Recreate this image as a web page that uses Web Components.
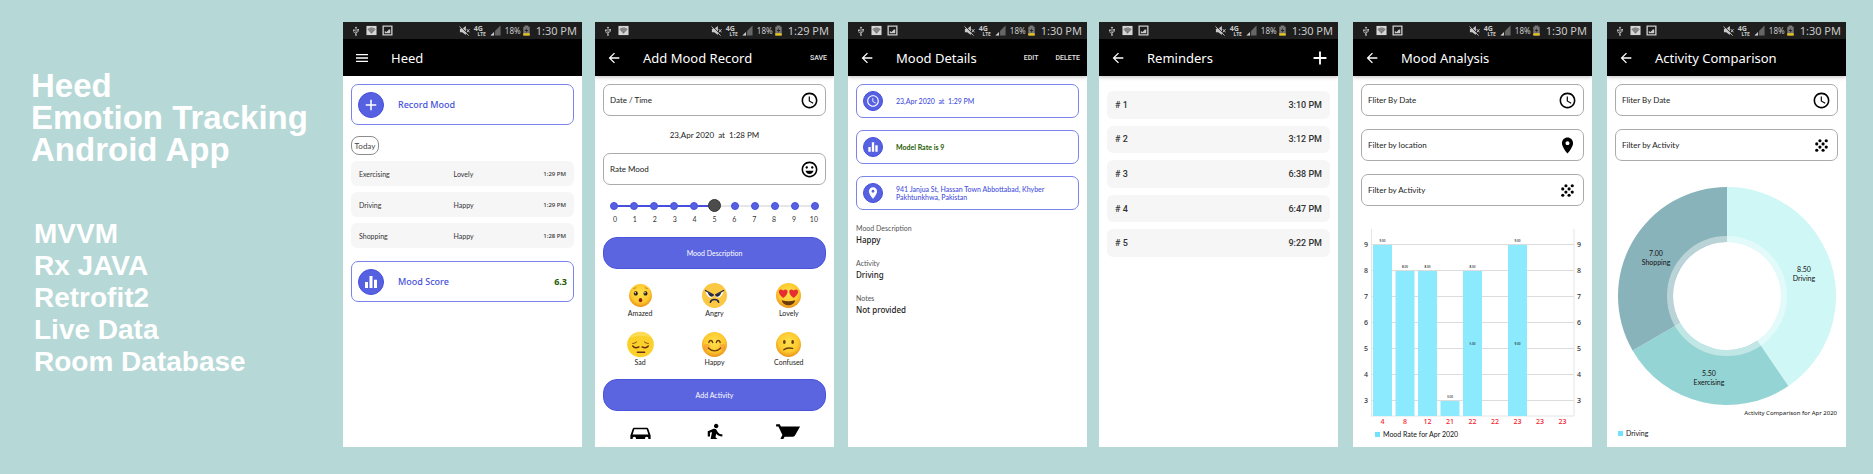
<!doctype html>
<html lang="en">
<head>
<meta charset="utf-8">
<meta name="viewport" content="width=device-width, initial-scale=1">
<title>Heed – Emotion Tracking Android App</title>
<style>
  html, body { margin: 0; background: #b6d8d6; }
  body { font-family: "Noto Sans", "Open Sans", sans-serif; color: #333; }
</style>
</head>
<body>
<heed-showcase></heed-showcase>

<script>
const RESET = `
  *, *::before, *::after { box-sizing: border-box; }
  button { font: inherit; color: inherit; background: none; border: 0; margin: 0; padding: 0; text-align: inherit; cursor: pointer; }
  h1, h2, p, ul, dl, dd, dt { margin: 0; padding: 0; list-style: none; }
  svg { display: block; }
`;
const SMALL = `font-family: Lato, "Noto Sans", sans-serif; font-size: 7px; line-height: 8px;`;
const MEDIUM = `font-family: Lato, "Noto Sans", sans-serif; font-size: 8px; line-height: 10px;`;

/* Registers an element whose shadow root is built by render(host). */
function element(name, css, render) {
  customElements.define(name, class extends HTMLElement {
    connectedCallback() {
      if (this.shadowRoot) return;
      const t = document.createElement('template');
      t.innerHTML = `<style>${RESET}${css}</style>${render(this)}`;
      this.attachShadow({ mode: 'open' }).append(t.content.cloneNode(true));
    }
  });
}

/* ---------- icons ---------- */
const ICONS = {
  menu: '<path d="M3 18h18v-2H3v2zm0-5h18v-2H3v2zm0-7v2h18V6H3z"/>',
  back: '<path d="M20 11H7.83l5.59-5.59L12 4l-8 8 8 8 1.41-1.41L7.83 13H20v-2z"/>',
  add: '<path d="M19 13h-6v6h-2v-6H5v-2h6V5h2v6h6v2z"/>',
  clock: '<path d="M11.99 2C6.47 2 2 6.48 2 12s4.47 10 9.99 10C17.52 22 22 17.52 22 12S17.52 2 11.99 2zM12 20c-4.42 0-8-3.58-8-8s3.58-8 8-8 8 3.58 8 8-3.58 8-8 8zm.5-13H11v6l5.25 3.15.75-1.23-4.5-2.67z"/>',
  mood: '<path d="M11.99 2C6.47 2 2 6.48 2 12s4.47 10 9.99 10C17.52 22 22 17.52 22 12S17.52 2 11.99 2zM12 20c-4.42 0-8-3.58-8-8s3.58-8 8-8 8 3.58 8 8-3.58 8-8 8zm3.5-9c.83 0 1.5-.67 1.5-1.5S16.33 8 15.5 8 14 8.67 14 9.5s.67 1.500 1.500 1.500zm-7 0c.83 0 1.500-.67 1.500-1.500S9.330 8 8.500 8 7 8.670 7 9.500 7.670 11 8.500 11z"/><path d="M6.900 13.500c.75 2.500 2.800 4.200 5.100 4.200s4.350-1.700 5.100-4.200z"/>',
  place: '<path d="M12 2C8.13 2 5 5.13 5 9c0 5.25 7 13 7 13s7-7.750 7-13c0-3.870-3.130-7-7-7zm0 9.500c-1.380 0-2.500-1.120-2.500-2.500s1.120-2.500 2.500-2.500 2.500 1.120 2.500 2.500-1.120 2.500-2.500 2.500z"/>',
  grain: [[10,6],[18,6],[6,10],[14,10],[10,14],[18,14],[6,18],[14,18]].map(([x, y]) => `<circle cx="${x}" cy="${y}" r="2"/>`).join(''),
  bars: '<path d="M10 20h4V4h-4v16zm-6 0h4v-8H4v8zM16 9v11h4V9h-4z"/>',
  car: '<path d="M18.920 6.010C18.720 5.420 18.160 5 17.500 5h-11c-.66 0-1.210.42-1.420 1.010L3 12v8c0 .55.45 1 1 1h1c.55 0 1-.45 1-1v-1h12v1c0 .55.45 1 1 1h1c.55 0 1-.45 1-1v-8l-2.080-5.990zM6.500 16c-.83 0-1.500-.67-1.500-1.500S5.670 13 6.500 13s1.500.67 1.500 1.500S7.330 16 6.500 16zm11 0c-.83 0-1.500-.67-1.500-1.500s.67-1.500 1.500-1.500 1.500.67 1.500 1.500-.67 1.500-1.500 1.500zM5 11l1.500-4.500h11L19 11H5z"/>',
  run: '<path d="M13.490 5.480c1.100 0 2-.9 2-2s-.9-2-2-2-2 .9-2 2 .9 2 2 2zm-3.600 13.900l1-4.400 2.100 2v6h2v-7.500l-2.100-2 .6-3c1.300 1.500 3.300 2.500 5.500 2.500v-2c-1.900 0-3.500-1-4.300-2.400l-1-1.600c-.4-.6-1-1-1.700-1-.3 0-.5.1-.8.1l-5.200 2.200v4.700h2v-3.400l1.800-.7-1.600 8.100-4.900-1-.4 2 7 1.400z"/>',
  cart: '<path d="M1 2v2h2l3.600 7.590-1.350 2.450C4.520 15.370 5.480 17 7 17h12v-2H7.420l1.130-2h7.450c.75 0 1.410-.41 1.750-1.030L22.300 4H5.210l-.94-2H1z"/>',
  usb: '<path d="M12 1l-3 4h2v11.500l-3.500-2.300V12H9V8.500H5V12h1v3.200l5 3.400V20a2 2 0 1 0 2 0v-3l5-3v-3h1V7h-4v4h1v2.200l-3 1.900V5h2z"/>',
  wifi: '<path fill="#d6d6d6" d="M1 2h22v20H1z"/><path fill="#777" d="M3 9c5-5 13-5 18 0l-9 10z"/><path fill="none" stroke="#bbb" d="M5 11c4-4 10-4 14 0M8 14c2-2 6-2 8 0"/>',
  picture: '<path fill-rule="evenodd" d="M1 1h22v22H1zM4 4v16h16V4z"/><path d="M6 18v-5l4 2 5-5h3v8z"/>',
  mute: '<path d="M2 8h5l8-6v20l-8-6H2z"/><path stroke="#1e1e1e" stroke-width="2" d="M3 2l18 20"/><path stroke="currentColor" stroke-width="2" d="M1 3l20 20M17 9l6 7M23 9l-6 7"/>',
  signal: '<path fill="#666" d="M23 1v22H1z"/><path d="M9 15v8H1z"/><path stroke="#1e1e1e" stroke-width="2" d="M10 12v12"/>',
  battery: '<path fill="#777" d="M8 1h8v3h3v19H5V4h3z"/><path fill="#e8c51c" d="M5 18h14v5H5z"/><path fill="#1e1e1e" d="M14 6l-6 7h4l-2 5 6-7h-4z"/>'
};
element('heed-icon', `
  :host { display: block; width: var(--size, 16px); height: var(--size, 16px); flex: none; }
  svg { width: 100%; height: 100%; fill: currentColor; }
`, el => `<svg viewBox="0 0 24 24" aria-hidden="true">${ICONS[el.getAttribute('name')]}</svg>`);

/* ---------- mood faces ---------- */
const FACES = {
  amazed: '<circle cx="12" cy="12" r="11" fill="url(#g)"/><g fill="#2b1e10"><ellipse cx="7.500" cy="10" rx="1.900" ry="2.100"/><ellipse cx="16.800" cy="10" rx="1.900" ry="2.100"/></g><g fill="#fff"><circle cx="7" cy="9.400" r=".7"/><circle cx="16.300" cy="9.400" r=".7"/></g><ellipse cx="12" cy="16.500" rx="1.700" ry="2" fill="#8c2018"/><path d="M5 5.500l3-1M16 4.500l3 1" stroke="#b87510" stroke-width=".7"/>',
  angry: '<circle cx="12" cy="12" r="12" fill="#fbc843"/><path d="M3.500 7.500l7.500 4c0 4-6.500 4-7.500-4zM20.500 7.500l-7.500 4c0 4 6.500 4 7.500-4z" fill="#fff"/><path d="M5.500 9l5.500 2.500c0 2.500-4 2.500-5.500-2.500zM18.500 9l-5.500 2.500c0 2.500 4 2.500 5.500-2.500z" fill="#232943"/><path d="M2.800 7l8.500 4.600M21.200 7l-8.500 4.600" stroke="#232943" stroke-width="1.200"/><path d="M8 18.500c1-3.500 7-3.500 8 0" fill="none" stroke="#232943" stroke-width="1.500" stroke-linecap="round"/>',
  lovely: '<circle cx="12" cy="12" r="12" fill="url(#g)"/><path d="M6.900 14.500C-.5 8.500 3.500 4.200 6.900 7.200c3.900-3.200 7.100 2 0 7.300z" fill="#e72c33"/><path d="M17 14.500c7.500-6 3.500-10.300 0-7.300-3.900-3.200-7.100 2 0 7.300z" fill="#e72c33"/><path d="M5.500 16.500c4 1.300 9 1.300 13 0-1.200 6.500-11.800 6.500-13 0z" fill="#6c3b0c"/>',
  sad: '<ellipse cx="12" cy="12" rx="12.800" ry="12.200" fill="#fbd02a"/><path d="M2 5C7-1 17-2 22 5c-7-2-15-1-20 0z" fill="#fddc55"/><g fill="none" stroke="#6b2c12" stroke-width="1.400" stroke-linecap="round"><path d="M4.500 13.500c1.500 1.800 4 1.800 6 .8M19.500 13.500c-1.500 1.800-4 1.800-6 .8M9 19.500h7"/><path stroke-width=".8" d="M4.500 11c1.500 0 2.800-.6 3.800-1.500M19.500 11c-1.500 0-2.800-.6-3.800-1.500"/></g>',
  happy: '<circle cx="12" cy="12" r="12" fill="url(#g)"/><circle cx="4.500" cy="14.500" r="3" fill="#f88a3c" opacity=".5"/><circle cx="19.500" cy="14.500" r="3" fill="#f88a3c" opacity=".5"/><g fill="none" stroke="#6b3c0c" stroke-width="1.400" stroke-linecap="round"><path d="M6.500 10c.8-2.400 3-2.400 3.800 0M13.700 10c.8-2.400 3-2.400 3.800 0M6.200 15.500c3 3.500 8.600 3.500 11.600 0"/></g>',
  confused: '<circle cx="12" cy="12" r="12" fill="url(#g)"/><g fill="#6b3c0c"><ellipse cx="8" cy="9.500" rx="1.300" ry="1.900"/><ellipse cx="16" cy="9.500" rx="1.300" ry="1.900"/></g><path d="M7.500 17c2-1.700 5-2 8.500-1.200" fill="none" stroke="#6b3c0c" stroke-width="1.300" stroke-linecap="round"/>'
};
element('mood-face', `
  :host { display: block; }
  button { display: flex; flex-direction: column; align-items: center; width: 100%; font-family: Lato, "Noto Sans", sans-serif; font-size: 7px; line-height: 11px; color: #222; }
  svg { width: 25px; height: 25px; overflow: visible; }
`, el => `<button type="button"><svg viewBox="0 0 24 24" aria-hidden="true"><defs><radialGradient id="g" cx=".5" cy=".4" r=".62"><stop offset="0" stop-color="#ffe14d"/><stop offset=".65" stop-color="#fdc92e"/><stop offset="1" stop-color="#e88a16"/></radialGradient></defs>${FACES[el.getAttribute('mood')]}</svg><slot></slot></button>`);

/* ---------- phone frame ---------- */
element('status-bar', `
  :host { display: flex; align-items: center; height: 17px; padding: 0 5px 0 8px; background: #1e1e1e; color: #c9c9c9; --size: 11px; }
  .left, .right { display: flex; align-items: center; }
  .left { gap: 5px; }
  .left heed-icon:first-child { --size: 10px; }
  .right { margin-left: auto; gap: 4px; }
  .net { position: relative; width: 12px; height: 12px; font-size: 7px; line-height: 8px; font-weight: 700; }
  .net small { position: absolute; right: 0; bottom: 0; font-size: 5px; line-height: 5px; }
  .level { display: flex; align-items: center; font-size: 8px; line-height: 12px; }
  time { font-size: 11px; line-height: 16px; }
`, el => `
  <div class="left"><heed-icon name="usb"></heed-icon><heed-icon name="wifi"></heed-icon>${el.hasAttribute('picture') ? '<heed-icon name="picture"></heed-icon>' : ''}</div>
  <div class="right"><heed-icon name="mute"></heed-icon><span class="net">4G<small>LTE</small></span><heed-icon name="signal"></heed-icon><span class="level">18%<heed-icon name="battery"></heed-icon></span><time>${el.getAttribute('time')}</time></div>`);

element('app-phone', `
  :host { display: flex; flex-direction: column; min-width: 0; background: #fff; }
  header { display: flex; align-items: center; gap: 21px; height: 37px; flex: none; padding: 0 7px 0 11px; background: #000; color: #fff; }
  header.raised { box-shadow: 0 1px 4px #00000040; clip-path: inset(0 0 -6px 0); }
  h2 { font-size: 13px; line-height: 18px; font-weight: 400; white-space: nowrap; }
  .actions { display: flex; align-items: center; gap: 17px; margin-left: auto; }
  main { flex: 1; display: flex; flex-direction: column; padding: 8px 8px 0; }
`, el => `
  <status-bar time="${el.getAttribute('time') || '1:30 PM'}" ${el.hasAttribute('plain-status') ? '' : 'picture'}></status-bar>
  <header class="${el.hasAttribute('home') ? '' : 'raised'}">
    <button type="button" aria-label="${el.hasAttribute('home') ? 'Menu' : 'Back'}"><heed-icon name="${el.hasAttribute('home') ? 'menu' : 'back'}"></heed-icon></button>
    <h2>${el.getAttribute('heading')}</h2>
    <div class="actions"><slot name="action"></slot></div>
  </header>
  <main><slot></slot></main>`);

element('bar-action', `
  :host { display: block; }
  button { display: block; font-family: Roboto, sans-serif; font-size: 7px; line-height: 10px; font-weight: 500; color: #e4e4e4; }
`, () => `<button type="button"><slot></slot></button>`);

/* ---------- controls ---------- */
element('field-button', `
  :host { display: block; }
  button { display: flex; align-items: center; justify-content: space-between; width: 100%; height: 32px; padding: 0 6px; border: 1px solid #ababab; border-radius: 7px; ${MEDIUM} color: #222; --size: 19px; }
  heed-icon { color: #000; }
`, el => `<button type="button"><slot></slot><heed-icon name="${el.getAttribute('icon')}"></heed-icon></button>`);

element('pill-button', `
  :host { display: block; }
  button { display: block; width: 100%; height: 32px; border: 1px solid #4a54dc; border-radius: 14px; background: #5b65e0; color: #fff; text-align: center; ${SMALL} }
`, () => `<button type="button"><slot></slot></button>`);

element('info-card', `
  :host { display: block; }
  .card { display: flex; align-items: center; width: 100%; border: 1px solid #7b84ea; border-radius: 7px; padding: 0 6px; color: #4650dc; }
  .large { height: 41px; gap: 14px; font-size: 9px; line-height: 12px; font-weight: 500; --size: 18px; }
  .small { height: 34px; gap: 13px; ${SMALL} font-weight: 500; --size: 14px; }
  .disc { display: grid; place-items: center; flex: none; border-radius: 50%; background: #5661e2; border: 1px solid #444edc; color: #fff; }
  .large .disc { width: 26px; height: 26px; }
  .small .disc { width: 20px; height: 20px; }
  .pre { white-space: pre; }
  ::slotted([slot=end]) { margin-left: auto; color: #1d5a00; font-weight: 700; }
`, el => {
  const tag = el.hasAttribute('small') ? 'div' : 'button type="button"';
  return `<${tag} class="card ${el.hasAttribute('small') ? 'small' : 'large'}"><span class="disc"><heed-icon name="${el.getAttribute('icon')}"></heed-icon></span><span class="pre"><slot></slot></span><slot name="end"></slot></${tag.split(' ')[0]}>`;
});

element('rate-slider', `
  :host { display: block; }
  .rail { position: relative; height: 14px; margin: 0 7px; }
  .line { position: absolute; inset: 6px 4px; height: 2px; background: linear-gradient(90deg, #4650dc 50%, #e6e6e6 50%); }
  .dots { position: absolute; inset: 3px 0; display: flex; justify-content: space-between; }
  .dots i { width: 8px; height: 8px; border-radius: 50%; background: #5560e2; border: 1px solid #4650dc; }
  input { position: absolute; inset: 0; width: 100%; height: 14px; margin: 0; appearance: none; background: none; }
  input::-webkit-slider-runnable-track { height: 14px; background: none; }
  input::-webkit-slider-thumb { appearance: none; width: 13px; height: 13px; border-radius: 50%; background: #4c4c4c; border: 1px solid #333; }
  ol { display: flex; justify-content: space-between; margin: 1px 7px 0; padding: 0; list-style: none; font-family: Lato, "Noto Sans", sans-serif; font-size: 7px; line-height: 10px; color: #333; }
  li { width: 10px; text-align: center; }
`, () => `
  <div class="rail"><div class="line"></div><div class="dots">${'<i></i>'.repeat(11)}</div><input type="range" min="0" max="10" value="5" aria-label="Rate Mood"></div>
  <ol>${[...Array(11).keys()].map(n => `<li>${n}</li>`).join('')}</ol>`);

/* ---------- screens ---------- */
element('home-screen', `
  :host { display: block; }
  .chip { display: block; width: 28px; height: 19px; margin: 11px 0 6px; border: 1px solid #8c8c8c; border-radius: 8px; text-align: center; ${MEDIUM} color: #444; }
  table { width: 100%; table-layout: fixed; border-spacing: 0 6px; margin: -6px 0 7px; ${SMALL} color: #333; }
  td { height: 25px; padding: 0; background: #f6f6f6; }
  td:first-child { width: 46%; padding-left: 8px; border-radius: 6px 0 0 6px; }
  td:last-child { text-align: right; padding-right: 8px; border-radius: 0 6px 6px 0; font-family: "Noto Sans", sans-serif; font-size: 6px; font-weight: 500; }
`, () => `
  <info-card icon="add">Record Mood</info-card>
  <button class="chip" type="button">Today</button>
  <table>
    <tr><td>Exercising</td><td>Lovely</td><td>1:29 PM</td></tr>
    <tr><td>Driving</td><td>Happy</td><td>1:29 PM</td></tr>
    <tr><td>Shopping</td><td>Happy</td><td>1:28 PM</td></tr>
  </table>
  <info-card icon="bars">Mood Score<span slot="end">6.3</span></info-card>`);

element('record-screen', `
  :host { display: block; }
  .when { height: 37px; display: grid; place-items: center; white-space: pre; ${MEDIUM} color: #222; }
  rate-slider { margin: 14px 0 13px; }
  .faces { display: grid; grid-template-columns: repeat(3, 1fr); row-gap: 13px; margin: 14px 0 11px; }
  .activities { display: grid; grid-template-columns: repeat(3, 1fr); height: 17px; margin: 11px 0 8px; overflow: hidden; color: #000; --size: 27px; }
  .activities button { display: grid; justify-content: center; }
`, () => `
  <field-button icon="clock">Date / Time</field-button>
  <p class="when">23,Apr 2020  at  1:28 PM</p>
  <field-button icon="mood">Rate Mood</field-button>
  <rate-slider></rate-slider>
  <pill-button>Mood Description</pill-button>
  <div class="faces">
    <mood-face mood="amazed">Amazed</mood-face><mood-face mood="angry">Angry</mood-face><mood-face mood="lovely">Lovely</mood-face>
    <mood-face mood="sad">Sad</mood-face><mood-face mood="happy">Happy</mood-face><mood-face mood="confused">Confused</mood-face>
  </div>
  <pill-button>Add Activity</pill-button>
  <div class="activities">
    <button type="button" aria-label="Driving"><heed-icon name="car"></heed-icon></button>
    <button type="button" aria-label="Exercising"><heed-icon name="run"></heed-icon></button>
    <button type="button" aria-label="Shopping"><heed-icon name="cart"></heed-icon></button>
  </div>`);

element('details-screen', `
  :host { display: block; }
  .cards { display: grid; gap: 12px; }
  .rate { color: #1d5a00; font-weight: 700; }
  dl { margin-top: 14px; }
  dt { ${SMALL} color: #555; }
  dd { font-size: 8px; line-height: 16px; font-weight: 500; color: #222; margin-bottom: 11px; }
`, () => `
  <div class="cards">
    <info-card small icon="clock">23,Apr 2020  at  1:29 PM</info-card>
    <info-card small icon="bars"><span class="rate">Model Rate is 9</span></info-card>
    <info-card small icon="place">941 Janjua St, Hassan Town Abbottabad, Khyber<br>Pakhtunkhwa, Pakistan</info-card>
  </div>
  <dl>
    <dt>Mood Description</dt><dd>Happy</dd>
    <dt>Activity</dt><dd>Driving</dd>
    <dt>Notes</dt><dd>Not provided</dd>
  </dl>`);

element('reminders-screen', `
  :host { display: block; padding-top: 7px; }
  ul { display: grid; grid-auto-rows: 1fr; gap: 7px; height: 166px; }
  li { display: flex; align-items: center; justify-content: space-between; padding: 0 8px; border-radius: 6px; background: #f6f6f6; font-family: Roboto, "Noto Sans", sans-serif; font-size: 9px; line-height: 12px; font-weight: 500; color: #333; }
`, () => `<ul>${['3:10', '3:12', '6:38', '6:47', '9:22'].map((t, i) => `<li><span># ${i + 1}</span><time>${t} PM</time></li>`).join('')}</ul>`);

const CHART_TEXT = `
  svg { width: 100%; height: auto; }
  .legend { display: flex; align-items: center; gap: 3px; ${SMALL} color: #111; }
  .legend::before { content: ""; width: 5px; height: 5px; background: #6fe3fb; }
`;
element('analysis-screen', `
  :host { display: block; }
  .filters { display: grid; gap: 13px; }
  .chart { margin: 0 -8px; }
  ${CHART_TEXT}
  .legend { margin: 2px 22px 0; }
  text { text-anchor: middle; font: 500 7px "Noto Sans", sans-serif; fill: #333; }
  .x { fill: #f4202c; }
  .v { font-size: 3px; fill: #111; }
`, () => {
  const y = v => 194 - (v - 3) * 26 + 1;
  const days = [[4, 9], [8, 8], [12, 8], [21, 3], [22, 8, 1], [22], [23, 9, 1], [23], [23]];
  const levels = [3, 4, 5, 6, 7, 8, 9];
  return `
  <div class="filters">
    <field-button icon="clock">Fliter By Date</field-button>
    <field-button icon="place">Filter by location</field-button>
    <field-button icon="grain">Filter by Activity</field-button>
  </div>
  <div class="chart">
    <svg viewBox="0 0 239 222" role="img" aria-label="Mood rate by day">
      <g stroke="#dcdcdc">${levels.map(v => `<path d="M18 ${y(v) - .5}H221"/>`).join('')}<path d="M18.500 23V210M221 23V210M18 210H221" stroke="#e4e4e4"/></g>
      ${levels.map(v => `<text x="13" y="${y(v) + 2}">${v}</text><text x="226" y="${y(v) + 2}">${v}</text>`).join('')}
      ${days.map(([d, v, mid], i) => {
        const x = 20 + i * 22.500;
        return (v ? `<rect x="${x}" y="${y(v)}" width="19" height="${210 - y(v)}" fill="#8beafe"/><text class="v" x="${x + 9.500}" y="${y(v) - 3}">${v}.00</text>` : '')
          + (mid ? `<text class="v" x="${x + 9.500}" y="139">${v === 8 ? 5 : 9}.00</text>` : '')
          + `<text class="x" x="${x + 9.500}" y="218">${d}</text>`;
      }).join('')}
    </svg>
    <div class="legend">Mood Rate for Apr 2020</div>
  </div>`;
});

element('comparison-screen', `
  :host { display: block; }
  .filters { display: grid; gap: 13px; }
  .chart { margin: 0 -8px; }
  ${CHART_TEXT}
  .note { margin: 0 9px 0 0; text-align: right; font-size: 6px; line-height: 10px; color: #111; }
  .legend { margin: 11px 11px 0; }
  text { text-anchor: middle; font: 7px Lato, "Noto Sans", sans-serif; fill: #111; }
`, () => {
  const cx = 120, cy = 135, R = 109, r = 54;
  const point = (a, d) => [cx + d * Math.sin(a), cy - d * Math.cos(a)].map(n => n.toFixed(2)).join(' ');
  let start = 0;
  const slices = [[8.5, '#cff7f6'], [5.5, '#95d4d4'], [7, '#89b3bb']].map(([v, fill]) => {
    const end = start + v / 21 * 2 * Math.PI;
    const d = `M${point(start, R)}A${R} ${R} 0 0 1 ${point(end, R)}L${point(end, r)}A${r} ${r} 0 0 0 ${point(start, r)}z`;
    start = end;
    return `<path d="${d}" fill="${fill}"/>`;
  }).join('');
  return `
  <div class="filters">
    <field-button icon="clock">Fliter By Date</field-button>
    <field-button icon="grain">Filter by Activity</field-button>
  </div>
  <div class="chart">
    <svg viewBox="0 0 239 247" role="img" aria-label="Activity comparison">
      ${slices}
      <circle cx="${cx}" cy="${cy}" r="57" fill="none" stroke="#fff" stroke-width="6" opacity=".42"/>
      <text x="197" y="111">8.50</text><text x="197" y="120">Driving</text>
      <text x="102" y="215">5.50</text><text x="102" y="224">Exercising</text>
      <text x="49" y="95">7.00</text><text x="49" y="104">Shopping</text>
    </svg>
    <p class="note">Activity Comparison for Apr 2020</p>
    <div class="legend">Driving</div>
  </div>`;
});

/* ---------- page ---------- */
element('heed-intro', `
  :host { display: block; color: #fff; font-family: "Liberation Sans", Arial, sans-serif; font-weight: 700; line-height: 32px; white-space: nowrap; padding: 48px 0 0 31px; }
  h1 { font-size: 33px; line-height: 32px; }
  ul { font-size: 28px; margin: 52px 0 0 3px; }
`, () => `
  <h1>Heed<br>Emotion Tracking<br>Android App</h1>
  <ul><li>MVVM</li><li>Rx JAVA</li><li>Retrofit2</li><li>Live Data</li><li>Room Database</li></ul>`);

element('heed-showcase', `
  :host {
    display: grid; min-height: 100vh; box-sizing: border-box; padding: 22px 0 27px;
    grid-template-columns:
      minmax(0, 343fr) minmax(0, 239fr) 13fr minmax(0, 239fr) 14fr minmax(0, 239fr) 12fr
      minmax(0, 239fr) 15fr minmax(0, 239fr) 15fr minmax(0, 239fr) 27fr;
  }
  app-phone:nth-of-type(1) { grid-column: 2; }
  app-phone:nth-of-type(2) { grid-column: 4; }
  app-phone:nth-of-type(3) { grid-column: 6; }
  app-phone:nth-of-type(4) { grid-column: 8; }
  app-phone:nth-of-type(5) { grid-column: 10; }
  app-phone:nth-of-type(6) { grid-column: 12; }
  .plus { --size: 22px; color: #fff; }
`, () => `
  <heed-intro></heed-intro>
  <app-phone heading="Heed" home><home-screen></home-screen></app-phone>
  <app-phone heading="Add Mood Record" time="1:29 PM" plain-status><bar-action slot="action">SAVE</bar-action><record-screen></record-screen></app-phone>
  <app-phone heading="Mood Details"><bar-action slot="action">EDIT</bar-action><bar-action slot="action">DELETE</bar-action><details-screen></details-screen></app-phone>
  <app-phone heading="Reminders"><button slot="action" type="button" aria-label="Add reminder"><heed-icon class="plus" name="add"></heed-icon></button><reminders-screen></reminders-screen></app-phone>
  <app-phone heading="Mood Analysis"><analysis-screen></analysis-screen></app-phone>
  <app-phone heading="Activity Comparison"><comparison-screen></comparison-screen></app-phone>`);
</script>
</body>
</html>
